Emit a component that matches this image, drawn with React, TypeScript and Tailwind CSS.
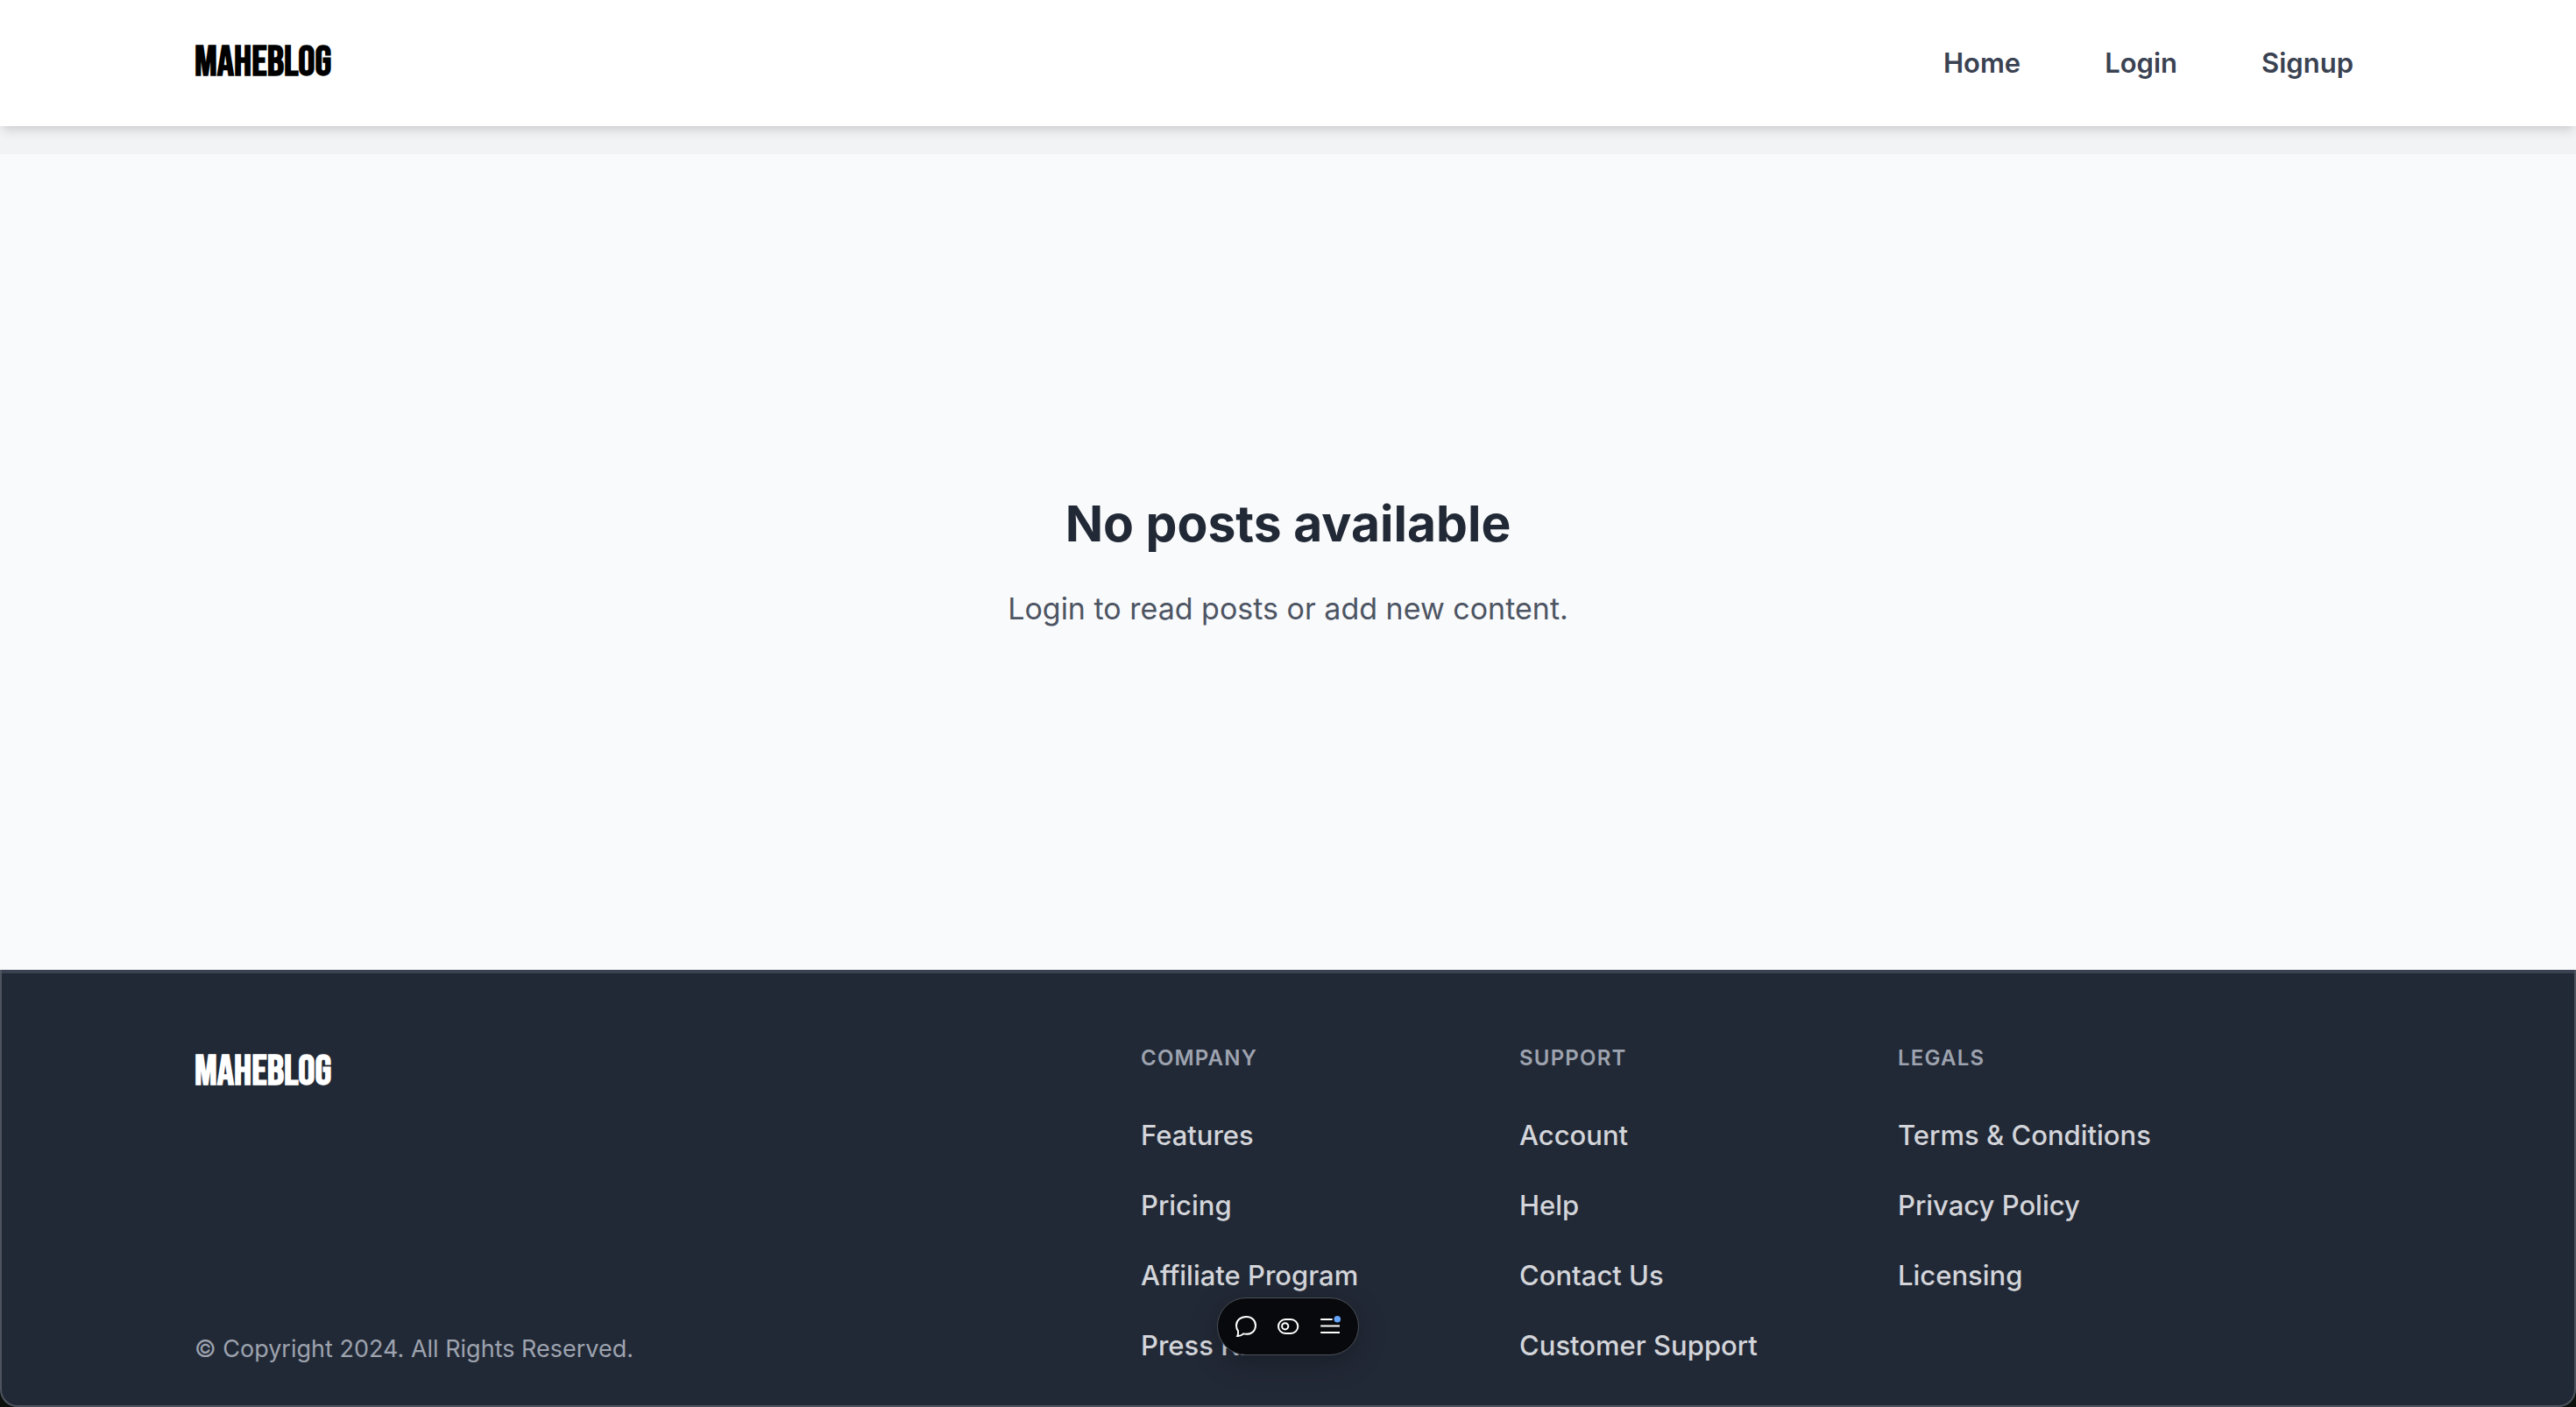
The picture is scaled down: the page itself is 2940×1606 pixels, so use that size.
import React from "react";

const navLinks = ["Home", "Login", "Signup"];

const footerGroups = [
  { title: "Company", links: ["Features", "Pricing", "Affiliate Program", "Press Kit"] },
  { title: "Support", links: ["Account", "Help", "Contact Us", "Customer Support"] },
  { title: "Legals", links: ["Terms & Conditions", "Privacy Policy", "Licensing"] },
];

function Logo({ tone }: { tone: string }) {
  return (
    <a
      href="#"
      className={`block font-['Bebas_Neue','Roboto',sans-serif] text-5xl leading-12 font-bold ${tone}`}
    >
      MAHEBLOG
    </a>
  );
}

function Header() {
  return (
    <header className="relative z-10 bg-white shadow-[0_8px_12px_-2px_rgba(0,0,0,0.1),0_4px_8px_-4px_rgba(0,0,0,0.1)]">
      <div className="mx-auto flex h-36 max-w-[2592px] items-center justify-between px-12">
        <Logo tone="text-black" />
        <nav className="flex gap-24 pr-8">
          {navLinks.map((label) => (
            <a key={label} href="#" className="text-[31px] leading-12 font-semibold text-[#3a4252]">
              {label}
            </a>
          ))}
        </nav>
      </div>
    </header>
  );
}

function Footer() {
  return (
    <footer className="bg-[#0c110d]">
      <div className="rounded-b-[20px] border-x-2 border-b-2 border-[#4e545f] bg-[#222936]">
        <div className="border-t-4 border-[#3a4150] pt-[81px] pb-[44px]">
          <div className="mx-auto grid max-w-[2592px] grid-cols-12">
            <div className="col-span-5 flex flex-col justify-between px-12 pt-2">
              <Logo tone="text-white" />
              <p className="text-[27px] leading-10 text-[#9da3af]">
                &copy; Copyright 2024. All Rights Reserved.
              </p>
            </div>
            {footerGroups.map((group, i) => (
              <div key={group.title} className={i === 2 ? "col-span-3 px-12" : "col-span-2 pl-12"}>
                <h3 className="mb-12 text-2xl leading-8 font-semibold tracking-wider text-[#9da3af] uppercase">
                  {group.title}
                </h3>
                <ul className="flex flex-col gap-8">
                  {group.links.map((label) => (
                    <li key={label} className="h-12">
                      <a
                        href="#"
                        className="text-[31px] leading-12 font-medium whitespace-nowrap text-[#d3d5da]"
                      >
                        {label}
                      </a>
                    </li>
                  ))}
                </ul>
              </div>
            ))}
          </div>
        </div>
      </div>
    </footer>
  );
}

function Toolbar() {
  return (
    <div className="fixed bottom-[59px] left-1/2 z-20 flex h-[66px] -translate-x-1/2 items-center gap-4 rounded-full border border-[#4b5058] bg-[#08090c] px-4 text-white shadow-[0_8px_32px_rgba(0,0,0,0.25)]">
      <button type="button" aria-label="Comments" className="size-8">
        <svg viewBox="0 0 32 32" fill="none" stroke="currentColor" strokeWidth="2">
          <path d="M16.5 5C22.5 5 27 9 27 15C27 21 22.5 24.800 16.500 24.800C15.300 24.800 14.200 24.700 13.200 24.400C11.400 26.200 9 27 6.300 26.900C7.100 25.500 7.400 23.400 7 21.200C5.700 19.600 5 17.500 5 15C5 9 9.800 5 16.500 5Z" />
        </svg>
      </button>
      <button type="button" aria-label="Preview mode" className="size-8">
        <svg viewBox="0 0 32 32" fill="none" stroke="currentColor" strokeWidth="2">
          <rect x="5" y="8" width="22.300" height="16" rx="8" />
          <circle cx="12.700" cy="15.800" r="3.600" />
        </svg>
      </button>
      <button type="button" aria-label="Menu" className="size-8">
        <svg viewBox="0 0 32 32" fill="none" stroke="currentColor" strokeWidth="2">
          <path d="M5.200 8H18.700M5.200 15.500H27M5.200 23H27" />
          <circle cx="24.300" cy="7.700" r="3.800" fill="#66a4fa" stroke="none" />
        </svg>
      </button>
    </div>
  );
}

export default function App() {
  return (
    <div className="flex min-h-screen flex-col bg-[#f2f3f5] font-['Inter',sans-serif]">
      <Header />
      <main className="mt-8 flex flex-1 flex-col items-center justify-center gap-8 bg-[#f9fafc] text-center">
        <h1 className="text-[57px] leading-[74px] font-bold text-[#222936]">No posts available</h1>
        <p className="text-[34px] leading-[56px] text-[#4d5563]">
          Login to read posts or add new content.
        </p>
      </main>
      <Footer />
      <Toolbar />
    </div>
  );
}
